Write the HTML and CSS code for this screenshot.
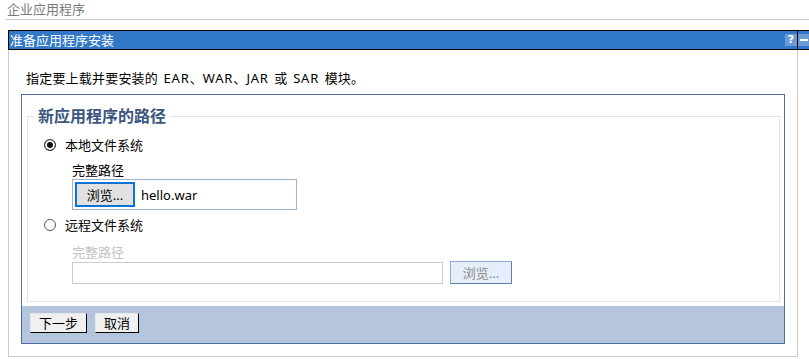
FILE: index.html
```html
<!DOCTYPE html>
<html lang="zh-CN">
<head>
<meta charset="utf-8">
<title>准备应用程序安装</title>
<link rel="stylesheet" href="styles.css">
</head>
<body>
<div class="screen">
  <div class="page-header">企业应用程序</div>
  <div class="portlet">
    <div class="titlebar">
      <div class="title">
        <span class="title-text">准备应用程序安装</span>
        <span class="icon-help">?</span>
      </div>
      <div class="min"><span class="icon-min"><span class="dash"></span></span></div>
    </div>
    <div class="portlet-body">
      <p class="intro">指定要上载并要安装的 <span class="latin">EAR</span>、<span class="latin">WAR</span>、<span class="latin">JAR</span> 或 <span class="latin">SAR</span> 模块。</p>
      <div class="panel">
        <fieldset class="group">
          <legend>新应用程序的路径</legend>
          <div class="opts">
            <label class="radio-row"><input type="radio" name="src" checked><span>本地文件系统</span></label>
            <div class="field">
              <div class="field-label">完整路径</div>
              <div class="file-box"><button class="btn-browse" type="button">浏览...</button><span class="file-name">hello.war</span></div>
            </div>
            <label class="radio-row second"><input type="radio" name="src"><span>远程文件系统</span></label>
            <div class="field disabled">
              <div class="field-label">完整路径</div>
              <div class="remote-row"><input type="text" class="remote-input" disabled><button class="btn-remote" type="button" disabled>浏览...</button></div>
            </div>
          </div>
        </fieldset>
        <div class="actions">
          <button class="btn" type="button">下一步</button>
          <button class="btn" type="button">取消</button>
        </div>
      </div>
    </div>
  </div>
</div>
</body>
</html>
```
FILE: styles.css
```css
html, body {
  margin: 0;
  padding: 0;
  background: #ffffff;
}
body {
  font-family: "Noto Sans", "Noto Sans CJK SC", sans-serif;
  font-size: 13px;
  color: #000;
}
.screen {
  width: 809px;
  height: 359px;
  overflow: hidden;
}
.page-header {
  margin-left: 6px;
  height: 19px;
  line-height: 19px;
  color: #7a7a7a;
  border-bottom: 1px solid #cccccc;
  padding-left: 1px;
}
.portlet {
  margin-top: 10px;
  margin-left: 8px;
}
.titlebar {
  display: flex;
  height: 20px;
}
.title {
  box-sizing: border-box;
  width: 790px;
  height: 20px;
  flex: none;
  border: 1px solid #000;
  background: #3278c8;
  display: flex;
  align-items: center;
  justify-content: space-between;
  padding-left: 1px;
}
.title-text {
  color: #ffffff;
  line-height: 18px;
}
.icon-help {
  width: 12px;
  height: 12px;
  background: #6c9bd5;
  color: #ffffff;
  font-family: "DejaVu Sans", sans-serif;
  font-weight: bold;
  font-size: 11px;
  line-height: 12px;
  text-align: center;
}
.min {
  flex: 1;
  box-sizing: border-box;
  height: 20px;
  border-top: 1px solid #000;
  border-bottom: 1px solid #000;
  background: #3278c8;
  display: flex;
  align-items: center;
}
.icon-min {
  width: 12px;
  height: 12px;
  background: #6c9bd5;
  display: flex;
  align-items: center;
  justify-content: center;
}
.dash {
  width: 8px;
  height: 2px;
  background: #ffffff;
}
.portlet-body {
  box-sizing: border-box;
  width: 790px;
  border: 1px solid #cccccc;
  border-top: none;
  padding-bottom: 12px;
}
.intro {
  margin: 0;
  padding: 19px 0 0 17px;
  line-height: 18px;
  letter-spacing: 0.2px;
  word-spacing: 2px;
}
.intro .latin {
  letter-spacing: 0.8px;
}
.panel {
  margin: 7px 12px 0 12px;
  border: 1px solid #4e6ca5;
  padding-top: 11px;
}
.group {
  margin: 0 4px 4px 5px;
  padding: 0 0 17px 6px;
  border: 1px solid #e3e3e3;
  min-width: 0;
}
.group legend {
  padding: 0 4px;
  margin: 0;
  font-size: 16px;
  font-weight: bold;
  line-height: 20px;
  color: #3b5580;
}
.opts {
  padding: 9px 0 0 10px;
}
.radio-row {
  display: flex;
  align-items: center;
  gap: 9px;
  height: 20px;
  line-height: 20px;
}
.radio-row.second {
  margin-top: 5px;
}
.radio-row input {
  -webkit-appearance: none;
  appearance: none;
  box-sizing: border-box;
  width: 12px;
  height: 12px;
  margin: 0;
  border: 1px solid #555555;
  border-radius: 50%;
  background: #ffffff;
}
.radio-row input:checked {
  border-color: #333333;
  background: #111111;
  box-shadow: inset 0 0 0 2px #ffffff;
}
.field {
  margin-left: 28px;
}
.field-label {
  margin-top: 6px;
  line-height: 18px;
}
.field.disabled .field-label {
  margin-top: 8px;
  color: #c3c3c3;
}
.file-box {
  box-sizing: border-box;
  width: 225px;
  height: 31px;
  border: 1px solid #9cb2d3;
  padding: 2px;
  display: flex;
  align-items: center;
}
.btn-browse {
  box-sizing: border-box;
  width: 60px;
  height: 25px;
  border: 2px solid #0a74d6;
  background: #e1e1e1;
  font-family: inherit;
  font-size: 13px;
  color: #000;
  padding: 0;
}
.file-name {
  margin-left: 6px;
}
.remote-row {
  display: flex;
  align-items: flex-start;
  gap: 7px;
}
.remote-input {
  box-sizing: border-box;
  width: 371px;
  height: 22px;
  margin: 1px 0 0 0;
  border: 1px solid #cccccc;
  background: #ffffff;
  padding: 0;
}
.btn-remote {
  box-sizing: border-box;
  width: 62px;
  height: 23px;
  border: 1px solid #8eaad0;
  border-right-color: #5b7fb2;
  border-bottom-color: #5b7fb2;
  background: #e6eef9;
  font-family: inherit;
  font-size: 13px;
  color: #8a8a8a;
  padding: 0;
}
.actions {
  background: #b5c5de;
  height: 37px;
  box-sizing: border-box;
  padding: 7px 0 0 8px;
  display: flex;
  align-items: flex-start;
  gap: 8px;
}
.btn {
  box-sizing: border-box;
  height: 20px;
  padding: 0 8px;
  border: 1px solid;
  border-color: #e6e6e6 #000000 #000000 #e6e6e6;
  background: #f0f0f0;
  font-family: inherit;
  font-size: 13px;
  line-height: 18px;
  color: #000;
}
```
